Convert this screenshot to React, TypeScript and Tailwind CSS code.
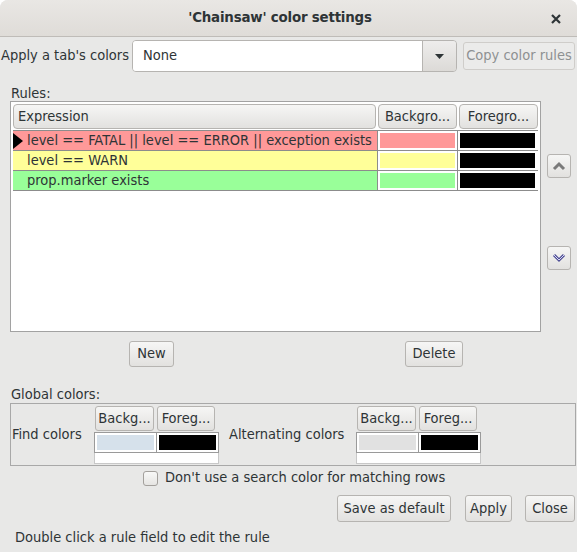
import React from "react";

const btn =
  "flex items-center justify-center rounded-[3px] border border-[#b6b4b1] bg-linear-to-b from-[#f6f6f5] to-[#e2e1df] text-[#2e3436]";

function ColorCell({ color }: { color: string }) {
  return (
    <div className="w-[80px] h-full border-l border-[#8c8c8c] bg-white p-[2px]">
      <div className="w-full h-full" style={{ background: color }} />
    </div>
  );
}

function Row({
  text,
  bg,
  marker,
}: {
  text: string;
  bg: string;
  marker?: boolean;
}) {
  return (
    <div className="flex h-[20px] border-b border-[#8c8c8c]">
      <div
        className="w-[364px] h-full flex items-center relative pl-[14px]"
        style={{ background: bg }}
      >
        {marker && (
          <svg
            width="10"
            height="16"
            viewBox="0 0 10 16"
            className="absolute left-0 top-[2px]"
          >
            <polygon points="0,0 10,8 0,16" fill="#000" />
          </svg>
        )}
        <span className="leading-none">{text}</span>
      </div>
      <ColorCell color={bg} />
      <ColorCell color="#000000" />
    </div>
  );
}

function ColorPair({ bg }: { bg: string }) {
  return (
    <div className="w-[125px] flex flex-col">
      <div className="flex gap-[3px] h-[25px] pl-[1px]">
        <div className={btn + " w-[59px] h-[25px]"}>Backg...</div>
        <div className={btn + " w-[58px] h-[25px]"}>Foreg...</div>
      </div>
      <div className="mt-[1px] flex h-[21px] border border-[#9a9a9a] bg-white">
        <div className="w-[62px] h-full p-[2px] border-r border-[#9a9a9a]">
          <div className="w-full h-full" style={{ background: bg }} />
        </div>
        <div className="flex-1 h-full p-[2px]">
          <div className="w-full h-full bg-black" />
        </div>
      </div>
      <div className="h-[11px] bg-white border-x border-b border-[#c8c8c8]" />
    </div>
  );
}

export default function App() {
  return (
    <div className="w-[577px] h-[552px] bg-white overflow-hidden">
      <div className="w-full h-full rounded-t-[8px] overflow-hidden bg-[#e8e8e7] text-[14.5px] text-[#2e3436] font-['DejaVu_Sans_Condensed','DejaVu_Sans',sans-serif] [font-stretch:condensed]">
        {/* title bar */}
        <div className="h-[37px] relative flex items-center justify-center bg-linear-to-b from-[#e9e7e4] to-[#dfdcd8] border-b border-[#bfbcb8]">
          <span className="font-bold text-[13.4px] [font-stretch:normal] font-['DejaVu_Sans',sans-serif] tracking-[-0.2px] ml-[-17px]">
            'Chainsaw' color settings
          </span>
          <svg
            width="10"
            height="10"
            viewBox="0 0 10 10"
            className="absolute right-[16px] top-[14px]"
          >
            <path d="M1 1 L9 9 M9 1 L1 9" stroke="#2e3436" strokeWidth="2.2" />
          </svg>
        </div>

        {/* apply row */}
        <div className="flex items-center h-[34px] mt-[2px]">
          <div className="w-[132px] pl-[1px] shrink-0">Apply a tab's colors</div>
          <div className="w-[325px] h-[32px] flex rounded-[4px] border border-[#b6b4b1] overflow-hidden">
            <div className="flex-1 bg-white flex items-center pl-[10px]">None</div>
            <div className="w-[34px] border-l border-[#b6b4b1] bg-linear-to-b from-[#eeedec] to-[#dcdad7] flex items-center justify-center">
              <svg width="9" height="5" viewBox="0 0 9 5">
                <polygon points="0,0 9,0 4.5,5" fill="#2e3436" />
              </svg>
            </div>
          </div>
          <div className="ml-[6px] w-[112px] h-[28px] rounded-[3px] border border-[#cfcdca] bg-[#ebebea] text-[#8e9192] flex items-center justify-center">
            Copy color rules
          </div>
        </div>

        {/* rules label */}
        <div className="pl-[11px] mt-[12px] h-[16px] leading-[16px]">Rules:</div>

        {/* table + arrows */}
        <div className="flex">
          <div className="ml-[10px] w-[531px] h-[231px] border border-[#a2a2a2] bg-white p-[2px] flex flex-col">
            <div className="flex gap-[2px] h-[26px] pb-[1px]">
              <div className={btn + " w-[363px] !justify-start pl-[4px] rounded-[4px]"}>Expression</div>
              <div className={btn + " w-[79px] rounded-[4px]"}>Backgro...</div>
              <div className={btn + " w-[79px] rounded-[4px]"}>Foregro...</div>
            </div>
            <div className="border-t border-[#8c8c8c]">
              <Row text="level == FATAL || level == ERROR || exception exists" bg="#ff9999" marker />
              <Row text="level == WARN" bg="#ffff99" />
              <Row text="prop.marker exists" bg="#99ff99" />
            </div>
          </div>
          <div className="ml-[6px] flex flex-col">
            <div className={btn + " mt-[53px] w-[24px] h-[24px]"}>
              <svg width="14" height="10" viewBox="0 0 14 10">
                <path d="M2 8 L7 3 L12 8" fill="none" stroke="#7a7a7a" strokeWidth="3" />
              </svg>
            </div>
            <div className={btn + " mt-[68px] w-[24px] h-[24px]"}>
              <svg width="14" height="10" viewBox="0 0 14 10">
                <path d="M2 2 L7 7 L12 2" fill="none" stroke="#4f4f96" strokeWidth="3" />
                <path d="M2 2 L7 7 L12 2" fill="none" stroke="#d8d8f4" strokeWidth="1" />
              </svg>
            </div>
          </div>
        </div>

        {/* new / delete */}
        <div className="flex mt-[9px] h-[26px]">
          <div className={btn + " ml-[129px] w-[45px] h-[26px]"}>New</div>
          <div className={btn + " ml-[231px] w-[58px] h-[26px]"}>Delete</div>
        </div>

        {/* global colors */}
        <div className="pl-[11px] mt-[19px] h-[16px] leading-[16px]">Global colors:</div>
        <div className="ml-[10px] mt-[1px] w-[566px] h-[63px] border border-[#a8a8a8] flex items-start pt-[2px]">
          <div className="w-[83px] pl-[1px] mt-[18px]">Find colors</div>
          <ColorPair bg="#d6e1eb" />
          <div className="ml-[10px] w-[127px] mt-[18px]">Alternating colors</div>
          <ColorPair bg="#e1e1e1" />
        </div>

        {/* checkbox */}
        <div className="flex items-center mt-[4px] h-[16px] pl-[143px]">
          <div className="w-[15px] h-[15px] rounded-[3px] border border-[#a3a09c] bg-linear-to-b from-[#f8f8f7] to-[#e6e5e3]" />
          <span className="ml-[7px]">Don't use a search color for matching rows</span>
        </div>

        {/* bottom buttons */}
        <div className="flex mt-[9px] h-[27px] pl-[337px]">
          <div className={btn + " w-[114px] h-[27px]"}>Save as default</div>
          <div className={btn + " ml-[14px] w-[47px] h-[27px]"}>Apply</div>
          <div className={btn + " ml-[13px] w-[50px] h-[27px]"}>Close</div>
        </div>

        <div className="pl-[15px] mt-[5px]">Double click a rule field to edit the rule</div>
      </div>
    </div>
  );
}
